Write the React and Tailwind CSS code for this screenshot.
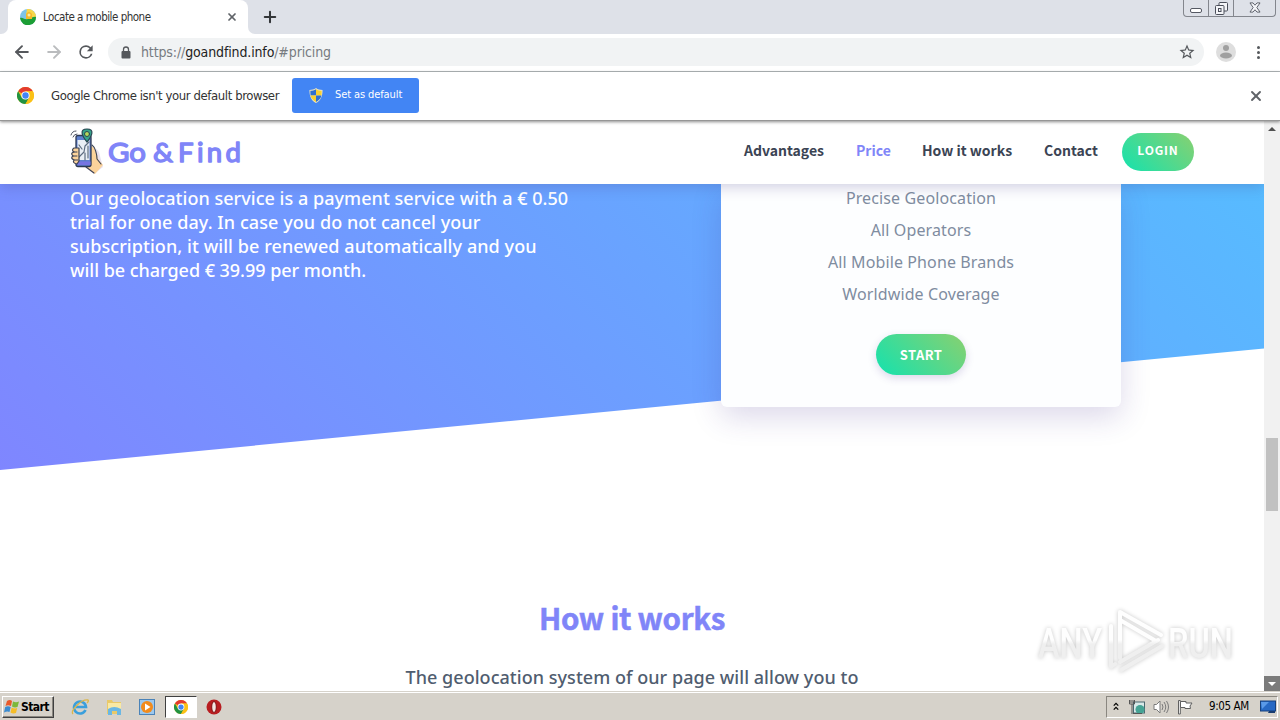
import { ArrowLeft, ArrowRight, Plus, Star, X } from "lucide-react";

const navItems = [
  { label: "Advantages", width: "w-[82px]" },
  { label: "Price", width: "w-[36px]", active: true },
  { label: "How it works", width: "w-[92px]" },
  { label: "Contact", width: "w-[56px]" },
];

const planFeatures = [
  "Precise Geolocation",
  "All Operators",
  "All Mobile Phone Brands",
  "Worldwide Coverage",
];

const pricingLines = [
  { text: "Our geolocation service is a payment service with a € 0.50", tracking: "tracking-[0.035px]" },
  { text: "trial for one day. In case you do not cancel your", tracking: "tracking-[0.07px]" },
  { text: "subscription, it will be renewed automatically and you", tracking: "tracking-[0.07px]" },
  { text: "will be charged € 39.99 per month.", tracking: "tracking-[-0.03px]" },
];

function ChromeIcon({ className }) {
  return (
    <svg viewBox="0 0 24 24" className={className}>
      <circle cx="12" cy="12" r="12" fill="#fbc116" />
      <path d="M12 12 1.6 6A12 12 0 0 1 22.4 6H12Z" fill="#e33b2e" />
      <path d="M1.6 6A12 12 0 0 0 12 24l5.2-9L12 12 6.8 15Z" fill="#229342" />
      <path d="M12 6h10.4A12 12 0 0 1 12 24l5.2-9Z" fill="#fbc116" />
      <circle cx="12" cy="12" r="5.8" fill="#fff" />
      <circle cx="12" cy="12" r="4.5" fill="#4285f4" />
    </svg>
  );
}

function SiteFavicon() {
  return (
    <svg viewBox="0 0 16 16" className="h-4 w-4">
      <circle cx="8" cy="8" r="8" fill="#7cc4e8" />
      <path d="M7 0a8 8 0 0 1 9 8l-6 1-4-3Z" fill="#f7d64a" />
      <path d="M0 9c3-1 4 2 8 1s6-3 8-2a8 8 0 0 1-15 4Z" fill="#1c9e35" />
      <path d="M6 5q3-4 6 0v5H6Z" fill="#f5b829" />
      <circle cx="9" cy="6" r="1.500" fill="#f8eaa4" />
    </svg>
  );
}

function ShieldIcon() {
  return (
    <svg viewBox="0 0 14 16" className="h-[15px] w-[14px]">
      <path d="M7 0c2 1.6 4.500 2 7 2 0 6-1.500 11-7 14C1.500 13 0 8 0 2c2.500 0 5-.4 7-2Z" fill="#e9e4c4" />
      <path d="M7 1.300V8H1.200C1 6 1 4.500 1 3c2.200 0 4-.5 6-1.700Z" fill="#2f6fd0" />
      <path d="M7 1.300C9 2.500 10.800 3 13 3c0 1.500 0 3-.2 5H7Z" fill="#f8d030" />
      <path d="M1.200 8H7v6.800C3.500 13 1.800 11 1.200 8Z" fill="#f8d030" />
      <path d="M7 8h5.800c-.6 3-2.300 5-5.800 6.800Z" fill="#2f6fd0" />
    </svg>
  );
}

function TabStrip() {
  return (
    <div className="flex h-[34px] shrink-0 bg-[#dee1e8]">
      <div className="h-full w-2 bg-white">
        <div className="h-full w-full rounded-br-[7px] bg-[#dee1e8]" />
      </div>
      <div className="flex w-[240px] items-center rounded-t-lg bg-white pl-3">
        <SiteFavicon />
        <span className="ml-[7px] flex-1 whitespace-nowrap pt-px text-[11.5px] tracking-[-0.5px] text-[#333]">
          Locate a mobile phone
        </span>
        <X className="mr-2.5 h-3 w-3 text-[#5f6368]" strokeWidth={3.5} />
      </div>
      <div className="h-full w-2 bg-white">
        <div className="h-full w-full rounded-bl-[7px] bg-[#dee1e8]" />
      </div>
      <div className="flex flex-1 items-center pl-[5px]">
        <Plus className="h-[18px] w-[18px] text-[#333639]" strokeWidth={2.700} />
      </div>
      <div className="mr-[4px] flex h-[17px] w-[93px] overflow-hidden rounded-b-[4px] border border-t-0 border-[#83868d]">
        <div className="flex w-[25px] items-end justify-center border-r border-[#83868d] pb-[3px]">
          <div className="h-[5px] w-[12px] rounded-[2px] border border-[#555963] bg-white" />
        </div>
        <div className="flex w-[25px] items-center justify-center border-r border-[#83868d]">
          <svg viewBox="0 0 13 13" className="h-[13px] w-[13px]" fill="#f4f5f8" stroke="#4b4f5a">
            <rect x="4" y="0.500" width="8.500" height="8.500" rx="1" />
            <rect x="0.500" y="3.500" width="8.500" height="9" rx="1" />
            <rect x="3.500" y="6.500" width="2.500" height="3" />
          </svg>
        </div>
        <div className="flex flex-1 items-center justify-center pb-px">
          <svg viewBox="0 0 12 12" className="h-[11px] w-[12px]" fill="#f4f5f8" stroke="#555963">
            <path d="M.5 1h3.300L6 3.500 8.200 1h3.300L8 6l3.500 5H8.200L6 8.500 3.800 11H.5L4 6Z" />
          </svg>
        </div>
      </div>
    </div>
  );
}

function Toolbar() {
  return (
    <div className="flex h-[38px] shrink-0 items-center border-b border-[#b3b8ba] bg-white pb-px">
      <ArrowLeft className="ml-[12px] h-5 w-5 text-[#55585c]" strokeWidth={2.300} />
      <ArrowRight className="ml-[12px] h-5 w-5 text-[#babcbe]" strokeWidth={2.300} />
      <svg viewBox="0 0 24 24" className="ml-3 h-5 w-5" fill="#55585c">
        <path d="M17.650 6.350A7.950 7.950 0 0 0 12 4a8 8 0 1 0 7.730 10h-2.080A6 6 0 1 1 12 6c1.660 0 3.140.69 4.220 1.780L13 11h7V4Z" />
      </svg>
      <div className="ml-[12px] flex h-7 w-[1096px] items-center rounded-full bg-[#f1f3f4] pl-[13px]">
        <svg viewBox="0 0 10 13" className="h-[13px] w-[10px]">
          <path d="M2.500 6V3.500a2.500 2.500 0 0 1 5 0V6" fill="none" stroke="#55585c" strokeWidth="1.300" />
          <rect x="0.500" y="5" width="9" height="7.500" rx="1" fill="#55585c" />
        </svg>
        <span className="ml-[10px] flex-1 whitespace-nowrap text-[14px] tracking-[-0.13px] text-[#777b80]">
          https://<span className="text-[#222]">goandfind.info</span>/#pricing
        </span>
        <svg viewBox="0 0 24 24" className="mr-2 h-[18px] w-[18px]" fill="#55585c">
          <path d="m22 9.240-7.190-.62L12 2 9.190 8.630 2 9.240l5.460 4.730L5.820 21 12 17.270 18.180 21l-1.630-7.030ZM12 15.400l-3.760 2.270 1-4.280-3.320-2.880 4.380-.38L12 6.100l1.710 4.040 4.380.38-3.320 2.880 1 4.280Z" />
        </svg>
      </div>
      <svg viewBox="0 0 20 20" className="ml-[12px] h-5 w-5">
        <circle cx="10" cy="10" r="10" fill="#dedede" />
        <circle cx="10" cy="6" r="3" fill="#a0a0a0" />
        <ellipse cx="10" cy="13.500" rx="6" ry="3" fill="#a0a0a0" />
      </svg>
      <div className="ml-[21px] flex flex-col gap-[2px]">
        <div className="h-[3px] w-[3px] rounded-full bg-[#55585c]" />
        <div className="h-[3px] w-[3px] rounded-full bg-[#55585c]" />
        <div className="h-[3px] w-[3px] rounded-full bg-[#55585c]" />
      </div>
    </div>
  );
}

function DefaultBrowserBar() {
  return (
    <div className="z-20 flex h-[49px] shrink-0 items-center border-b border-[#969696] bg-white pb-px pl-[17px] shadow-[0_1px_3px_rgba(0,0,0,0.45)]">
      <ChromeIcon className="h-[17px] w-[17px]" />
      <span className="ml-[17px] w-[241px] whitespace-nowrap text-[13px] tracking-[-0.41px] text-[#333]">
        Google Chrome isn't your default browser
      </span>
      <button type="button" className="flex h-[35px] w-[127px] items-center rounded-[3px] bg-[#4285f4] pl-[17px] text-white">
        <ShieldIcon />
        <span className="ml-3 whitespace-nowrap text-[11px] tracking-[-0.1px]">Set as default</span>
      </button>
      <X className="mr-[16px] ml-auto h-4 w-4 text-[#5f6368]" strokeWidth={2.800} />
    </div>
  );
}

function SiteLogo() {
  return (
    <div className="flex items-center">
      <svg viewBox="0 0 34 48" className="h-12 w-[34px]" strokeLinecap="round" strokeLinejoin="round">
        <path d="M24 20q5 1 6 8l3 11-9 7-8-6Z" fill="#e9e2f0" />
        <path d="M20 18c5 0 7 8 8 13l5 6-8 9-9-7-3-6Z" fill="#fbd39b" />
        <path d="M22 17c3 2 5 9 5 14l4 5M16 39l8 6" fill="none" stroke="#3d4354" strokeWidth="1.100" />
        <rect x="6" y="7.500" width="15" height="31" rx="2" fill="#5d7fcf" stroke="#2c3854" strokeWidth="1.300" />
        <rect x="7.500" y="12" width="12" height="20" fill="#e9eff5" />
        <path d="m9 29 5-5 1-6 4-4M9 17l3 4m3 11v-7m3 5V18" fill="none" stroke="#5d6d80" strokeWidth="1.200" />
        <path d="M7 33.500h13.500V37H7Z" fill="#7674e2" />
        <path d="M8 20H4q-3 2 0 4-4 1-1 4-3 2 1 4-2 3 3 4l2-3V20Z" fill="#fbd39b" stroke="#3d4354" strokeWidth="1.200" />
        <path d="M3 24h4m-4 4h4m-3 4h4" stroke="#3d4354" />
        <path d="M17 1c8 0 5 7 0 13-5-6-8-13 0-13Z" fill="#36a48b" stroke="#294651" strokeWidth="1.200" />
        <circle cx="17" cy="6" r="2.500" fill="#b5d85b" stroke="#294651" />
        <path d="M1 7q1-4 5-4M3 9q1-3 4-3" fill="none" stroke="#4d5363" />
      </svg>
      <svg
        viewBox="0 0 140 40"
        className="ml-1 h-10 w-[140px] font-['Lato',sans-serif] text-[27.500px]"
        fill="#8085f8"
        stroke="#8085f8"
        strokeWidth="1.400"
        strokeLinejoin="round"
      >
        <text x="0" y="29.500" textLength="38" lengthAdjust="spacingAndGlyphs">Go</text>
        <text x="45" y="29.500" textLength="20" lengthAdjust="spacingAndGlyphs">&amp;</text>
        <text x="70" y="29.500" textLength="63" lengthAdjust="spacing">Find</text>
      </svg>
    </div>
  );
}

function SiteHeader() {
  return (
    <header className="z-10 flex h-[63px] shrink-0 items-center bg-white pb-0.5 pl-[70px] shadow-[0_4px_12px_rgba(70,60,130,0.22)]">
      <SiteLogo />
      <nav className="ml-auto flex gap-[30px] pb-[3px] font-['Noto_Sans_CJK_SC',sans-serif] text-[14px] font-bold">
        {navItems.map((item) => (
          <a
            key={item.label}
            className={`${item.width} whitespace-nowrap ${item.active ? "text-[#8085f8]" : "text-[#3b4454]"}`}
          >
            {item.label}
          </a>
        ))}
      </nav>
      <button
        type="button"
        className="mr-[70px] ml-[22px] h-[38px] w-[72px] rounded-full bg-linear-[45deg] from-[#14e2ae] to-[#89d070] pb-[3px] font-['Noto_Sans_CJK_SC',sans-serif] text-[12px] font-bold tracking-[0.8px] text-white"
      >
        LOGIN
      </button>
    </header>
  );
}

function Pricing() {
  return (
    <section className="grid h-[286px] shrink-0">
      <div className="col-start-1 row-start-1 bg-linear-[45deg] from-[#7f86ff] to-[#57bbff] [clip-path:polygon(0_0,100%_0,100%_57.5%,0_100%)]" />
      <div className="z-[1] col-start-1 row-start-1 flex items-start justify-between pr-[143px] pl-[70px]">
        <div className="pt-[2px] font-['Noto_Sans',sans-serif] text-[18px] leading-6 font-medium text-white">
          {pricingLines.map((line) => (
            <p key={line.text} className={`whitespace-nowrap ${line.tracking}`}>
              {line.text}
            </p>
          ))}
        </div>
        <div className="flex h-[223px] w-[400px] flex-col items-center rounded-b-[6px] bg-[#fdfeff] shadow-[0_10px_30px_rgba(60,40,140,0.18)]">
          <ul className="-mt-0.5 text-center font-['Noto_Sans',sans-serif] text-[16px] leading-8 tracking-[0.12px] text-[#7f8ca0]">
            {planFeatures.map((feature) => (
              <li key={feature}>{feature}</li>
            ))}
          </ul>
          <button
            type="button"
            className="mt-6 h-[41px] w-[90px] rounded-full bg-linear-[45deg] from-[#14e2ae] to-[#89d070] font-['Noto_Sans_CJK_SC',sans-serif] text-[13px] font-bold tracking-[0.4px] text-white shadow-[0_3px_8px_rgba(60,40,140,0.18)]"
          >
            START
          </button>
        </div>
      </div>
    </section>
  );
}

function HowItWorks() {
  return (
    <section className="flex flex-col items-center pt-[123px]">
      <h2 className="font-['Noto_Sans_CJK_SC',sans-serif] text-[29.500px] leading-[48px] font-bold tracking-[-0.3px] text-[#8085f8] [-webkit-text-stroke:0.5px_#8085f8]">
        How it works
      </h2>
      <p className="mt-[24px] font-['Noto_Sans',sans-serif] text-[18px] leading-6 font-medium tracking-[0.04px] whitespace-nowrap text-[#505d6f]">
        The geolocation system of our page will allow you to
      </p>
    </section>
  );
}

function Scrollbar() {
  return (
    <div className="flex w-4 shrink-0 flex-col items-center bg-[#f1f1f1]">
      <svg viewBox="0 0 16 16" className="h-4 w-4">
        <path d="M4 10 8 6l4 4Z" fill="#505050" />
      </svg>
      <div className="mt-[301px] h-[73px] w-3 bg-[#c1c1c1]" />
      <div className="mt-auto flex h-4 w-4 items-center justify-center bg-[#7b7b7b]">
        <svg viewBox="0 0 16 16" className="h-4 w-4">
          <path d="m4 6 4 4 4-4Z" fill="#fff" />
        </svg>
      </div>
    </div>
  );
}

function Watermark() {
  return (
    <div className="absolute top-[606px] left-[1037px] drop-shadow-[0_0_2px_rgba(0,0,0,0.22)]">
      <svg viewBox="0 0 220 80" className="h-[80px] w-[220px] font-['Roboto',sans-serif] text-[43px] font-medium" fill="none">
        <defs>
          <linearGradient id="sheen" gradientUnits="userSpaceOnUse" x1="0" y1="0" x2="0" y2="68">
            <stop offset="0.5" stopColor="#fefefe" />
            <stop offset="0.56" stopColor="#efefef" />
          </linearGradient>
        </defs>
        <text x="1" y="52" textLength="64" lengthAdjust="spacingAndGlyphs" fill="url(#sheen)">
          ANY
        </text>
        <g stroke="url(#sheen)" strokeLinejoin="round" strokeLinecap="round">
          <path d="M74 20v41l4-3" strokeWidth="4" />
          <path d="M83 52V6l41 23M83 14l36 21" strokeWidth="4" />
          <path d="m83 56 38-22M84 64l41-24" strokeWidth="4" />
        </g>
        <text x="131" y="52" textLength="65" lengthAdjust="spacingAndGlyphs" fill="url(#sheen)">
          RUN
        </text>
      </svg>
    </div>
  );
}

function WindowsFlag() {
  return (
    <svg viewBox="0 0 16 16" className="h-4 w-4">
      <path d="M3 2q3-2 5 0L7 7Q4 5.500 1.500 7Z" fill="#e8592b" />
      <path d="M9 2.500q3 1.500 6 0L13.500 8q-3 1-5.500-.5Z" fill="#7cb83c" />
      <path d="M1.200 8Q4 6.500 6.700 8l-1.200 5Q3 12 0 13.500Z" fill="#3a8bd0" />
      <path d="M7.700 8.500q3 1.500 5.500.5L12 14q-3 1-5.500-.5Z" fill="#f5bd28" />
    </svg>
  );
}

function Taskbar() {
  return (
    <footer className="flex h-[28px] shrink-0 items-center border-t border-white bg-[#d6d2ca] pl-[2px] font-['DejaVu_Sans_Condensed','DejaVu_Sans',sans-serif] text-black outline outline-[#d6d2ca]">
      <button
        type="button"
        className="flex h-[22px] w-[52px] items-center border border-t-white border-r-[#404040] border-b-[#404040] border-l-white pl-[1px] text-[12px] font-bold tracking-[-0.6px] shadow-[inset_-1px_-1px_0_#8a8780]"
      >
        <WindowsFlag />
        <span className="ml-px">Start</span>
      </button>
      <svg viewBox="0 0 18 18" className="ml-[17px] h-[18px] w-[18px]" fill="none">
        <path d="M14.500 12A6 6 0 1 1 15 9H5" stroke="#3a9fdc" strokeWidth="2.600" />
        <path d="M2 16C-1 13 10 1 17 2q1 1-1 3" stroke="#dcb64a" strokeWidth="1.300" />
      </svg>
      <svg viewBox="0 0 18 18" className="ml-4 h-[18px] w-[18px]">
        <path d="M2 2h5l1 2h8v12H2Z" fill="#e9c968" />
        <path d="M3 5h13v7H3Z" fill="#f9e9a4" />
        <path d="M3 11q6-4 13 0v6h-4v-4H7v4H3Z" fill="#6ab7e4" />
      </svg>
      <svg viewBox="0 0 16 16" className="ml-4 h-4 w-4">
        <rect x=".5" y=".5" width="15" height="15" fill="#9cc8ee" stroke="#4b83b8" />
        <circle cx="8" cy="8" r="6" fill="#f28b1c" />
        <path d="m6 4.500 5.500 3.500L6 11.500Z" fill="#fff" />
      </svg>
      <div className="ml-[10px] flex h-[22px] w-[32px] items-center justify-center border border-t-[#404040] border-r-white border-b-white border-l-[#404040] bg-white">
        <ChromeIcon className="h-[14px] w-[14px]" />
      </div>
      <svg viewBox="0 0 16 16" className="ml-[9px] h-4 w-4">
        <circle cx="8" cy="8" r="7.500" fill="#b81d20" />
        <ellipse cx="8" cy="8" rx="2.300" ry="5.500" fill="#f2e6e2" stroke="#7e0e10" />
      </svg>
      <div className="mr-[2px] ml-auto flex h-[22px] w-[172px] items-center border border-t-[#8a8780] border-r-white border-b-white border-l-[#8a8780] pl-[5px]">
        <svg viewBox="0 0 8 10" className="h-[9px] w-2" fill="none" stroke="#000" strokeWidth="1.400">
          <path d="m1.500 4 2.500-2.500L6.500 4m-5 4.500L4 6l2.500 2.500" />
        </svg>
        <svg viewBox="0 0 16 16" className="ml-[9px] h-4 w-4">
          <rect x="4.500" y="3" width="11" height="11" fill="#d8e9e8" stroke="#4a6870" />
          <circle cx="11" cy="10.500" r="4.500" fill="#45a394" />
          <path d="M4 14.500h9" stroke="#555" />
          <path d="M.5 1v4h5V1M2 1v3m2-3v3M3 5v10" stroke="#555" fill="none" />
        </svg>
        <svg viewBox="0 0 17 16" className="ml-[8px] h-4 w-[17px]" fill="none" stroke="#7b7b7b">
          <path d="M1 5.500h2.500L7 2v12l-3.500-3.500H1Z" fill="#fff" />
          <path d="M9 5q2 3 0 6m2-8q3.500 5 0 10m2.500-11q4 6 0 12" />
        </svg>
        <svg viewBox="0 0 16 16" className="ml-[7px] h-4 w-4" fill="#fff" stroke="#606060">
          <path d="M1.500 1.500h1.800V15H1.500Z" />
          <path d="M3.500 2.500H9V4h6l-2 3 .5 2.500H8V8.500H3.500Z" />
        </svg>
        <span className="ml-[16px] whitespace-nowrap pt-px text-[11.5px] tracking-[-0.4px]">9:05 AM</span>
        <svg viewBox="0 0 16 14" className="mr-px ml-auto h-[14px] w-4">
          <rect x=".5" y="1" width="15" height="10" fill="#2769c4" stroke="#17417d" />
          <path d="M1 2h8L2 9Z" fill="#5a9ae8" />
          <path d="M8 13h7v-2H9Z" fill="#183c70" />
        </svg>
      </div>
    </footer>
  );
}

export default function App() {
  return (
    <div className="relative flex h-screen w-full flex-col overflow-hidden bg-white font-['DejaVu_Sans_Condensed','DejaVu_Sans',sans-serif]">
      <TabStrip />
      <Toolbar />
      <DefaultBrowserBar />
      <div className="flex min-h-0 flex-1">
        <main className="flex min-w-0 flex-1 flex-col overflow-hidden bg-white">
          <SiteHeader />
          <Pricing />
          <HowItWorks />
        </main>
        <Scrollbar />
      </div>
      <Taskbar />
      <Watermark />
    </div>
  );
}
